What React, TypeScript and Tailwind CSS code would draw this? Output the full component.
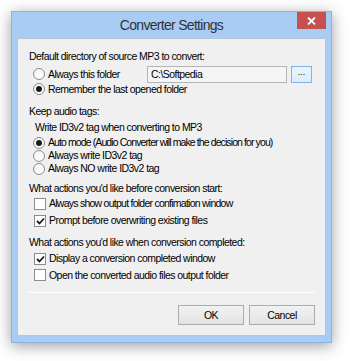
import React from "react";

const font = { fontFamily: '"Liberation Sans", Arial, sans-serif' };

function Radio({ checked }: { checked?: boolean }) {
  return (
    <div className="w-[12px] h-[12px] rounded-full border border-[#8c8c8c] bg-gradient-to-br from-[#f4f4f4] to-[#ffffff] flex items-center justify-center shrink-0">
      {checked && <div className="w-[6px] h-[6px] rounded-full bg-[#1a1a1a]" />}
    </div>
  );
}

function Check({ checked }: { checked?: boolean }) {
  return (
    <div className="w-[12px] h-[12px] border border-[#8c8c8c] bg-white flex items-center justify-center shrink-0">
      {checked && (
        <svg width="9" height="8" viewBox="0 0 9 8">
          <path d="M1 4 L3.5 6.5 L8 1.5" fill="none" stroke="#1a1a1a" strokeWidth="1.8" />
        </svg>
      )}
    </div>
  );
}

export default function App() {
  return (
    <div className="w-[350px] h-[361px] bg-white pt-[11px] pl-[11px] text-[10.5px] tracking-[-0.55px] text-black leading-none whitespace-nowrap" style={font}>
      <div className="w-[321px] h-[332px] bg-[#a8ccf3] border border-[#8db4de] shadow-[0_3px_14px_rgba(0,0,0,0.38)] flex flex-col">
        {/* title bar */}
        <div className="h-[26px] relative flex items-start justify-center">
          <div className="mt-[6px] text-[14px] tracking-[-0.7px] text-[#333333]">
            Converter Settings
          </div>
          <div className="absolute right-[5px] top-0 w-[29px] h-[17px] bg-[#c75050] flex items-center justify-center">
            <svg width="9" height="8" viewBox="0 0 9 8">
              <path d="M1 0.5 L8 7.5 M8 0.5 L1 7.5" stroke="white" strokeWidth="1.8" />
            </svg>
          </div>
        </div>
        {/* client */}
        <div className="mx-[5px] mb-[6px] flex-1 bg-[#f0f0f0] border border-[#b7c6d6] flex flex-col">
          <div className="h-[8px]" />
          <div className="h-[18px] flex items-center pl-[11px]">Default directory of source MP3 to convert:</div>
          <div className="h-[18px] flex items-center pl-[15px]">
            <Radio />
            <span className="ml-[3px] w-[99px]">Always this folder</span>
            <div className="w-[140px] h-[17px] border border-[#b5b5b5] bg-[#f5f5f5] flex items-center pl-[3px]">C:\Softpedia</div>
            <div className="ml-[4px] w-[21px] h-[17px] border border-[#7eb4ea] bg-gradient-to-b from-[#ecf4fc] to-[#dcecfc] flex items-center justify-center text-[9px] tracking-normal pb-[3px]">...</div>
          </div>
          <div className="h-[12px] flex items-center pl-[15px]">
            <Radio checked />
            <span className="ml-[3px]">Remember the last opened folder</span>
          </div>
          <div className="h-[9px]" />
          <div className="h-[14px] flex items-center pl-[11px]">Keep audio tags:</div>
          <div className="h-[18px] flex items-center pl-[17px]">Write ID3v2 tag when converting to MP3</div>
          <div className="h-[13px] flex items-center pl-[15px]">
            <Radio checked />
            <span className="ml-[3px] tracking-[-0.9px]">Auto mode (Audio Converter will make the decision for you)</span>
          </div>
          <div className="h-[13px] flex items-center pl-[15px]">
            <Radio />
            <span className="ml-[3px]">Always write ID3v2 tag</span>
          </div>
          <div className="h-[13px] flex items-center pl-[15px]">
            <Radio />
            <span className="ml-[3px]">Always NO write ID3v2 tag</span>
          </div>
          <div className="h-[6px]" />
          <div className="h-[14px] flex items-center pl-[11px]">What actions you'd like before conversion start:</div>
          <div className="h-[17px] flex items-center pl-[16px]">
            <Check />
            <span className="ml-[3px] tracking-[-0.75px]">Always show output folder confimation window</span>
          </div>
          <div className="h-[17px] flex items-center pl-[16px]">
            <Check checked />
            <span className="ml-[3px]">Prompt before overwriting existing files</span>
          </div>
          <div className="h-[6px]" />
          <div className="h-[14px] flex items-center pl-[11px]">What actions you'd like when conversion completed:</div>
          <div className="h-[1px]" />
          <div className="h-[17px] flex items-center pl-[16px]">
            <Check checked />
            <span className="ml-[3px]">Display a conversion completed window</span>
          </div>
          <div className="h-[16px] flex items-center pl-[16px]">
            <Check />
            <span className="ml-[3px]">Open the converted audio files output folder</span>
          </div>
          <div className="h-[9px]" />
          <div className="mx-[10px] h-[1px] bg-[#a0a0a0] border-b border-white" />
          <div className="h-[12px]" />
          <div className="flex justify-end pr-[10px] gap-[5px]">
            <div className="w-[66px] h-[20px] border border-[#acacac] bg-gradient-to-b from-[#f2f2f2] to-[#e3e3e3] flex items-center justify-center">OK</div>
            <div className="w-[66px] h-[20px] border border-[#acacac] bg-gradient-to-b from-[#f2f2f2] to-[#e3e3e3] flex items-center justify-center">Cancel</div>
          </div>
        </div>
      </div>
    </div>
  );
}
